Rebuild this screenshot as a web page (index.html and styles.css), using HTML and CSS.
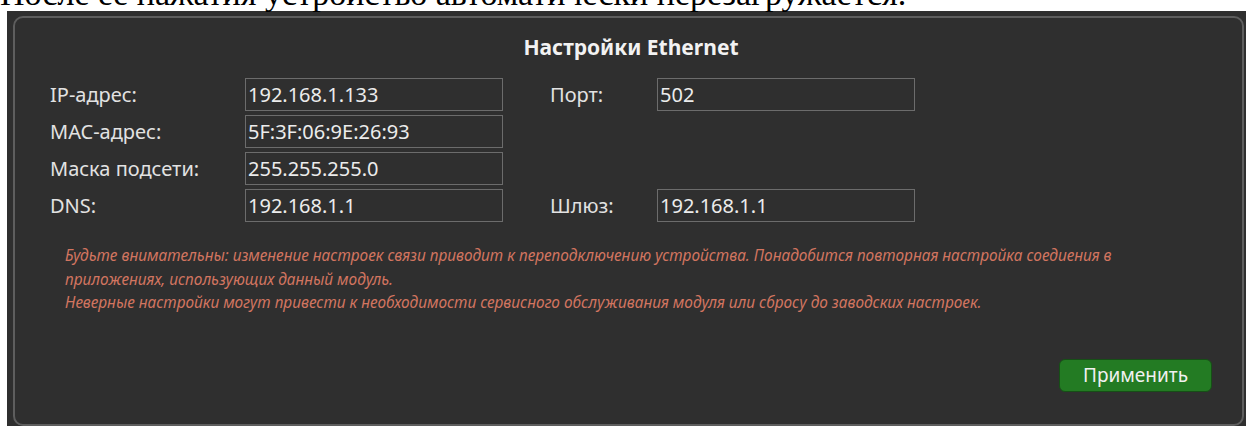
FILE: index.html
```html
<!DOCTYPE html>
<html lang="ru">
<head>
<meta charset="utf-8">
<title>Настройки Ethernet</title>
<link rel="stylesheet" href="styles.css">
</head>
<body>
<p class="note">После ее нажатия устройство автоматически перезагружается.</p>
<div class="frame">
  <form class="panel" onsubmit="return false">
    <h2 class="panel-title">Настройки Ethernet</h2>
    <div class="fields">
      <label class="field-label col-a" for="ip">IP-адрес:</label>
      <input class="field-input col-b" id="ip" type="text" value="192.168.1.133">
      <label class="field-label col-c" for="port">Порт:</label>
      <input class="field-input col-d" id="port" type="text" value="502">

      <label class="field-label col-a" for="mac">MAC-адрес:</label>
      <input class="field-input col-b" id="mac" type="text" value="5F:3F:06:9E:26:93">

      <label class="field-label col-a" for="mask">Маска подсети:</label>
      <input class="field-input col-b" id="mask" type="text" value="255.255.255.0">

      <label class="field-label col-a" for="dns">DNS:</label>
      <input class="field-input col-b" id="dns" type="text" value="192.168.1.1">
      <label class="field-label col-c" for="gw">Шлюз:</label>
      <input class="field-input col-d" id="gw" type="text" value="192.168.1.1">
    </div>
    <p class="warning">Будьте внимательны: изменение настроек связи приводит к переподключению устройства. Понадобится повторная настройка соедиения в приложениях, использующих данный модуль.<br>Неверные настройки могут привести к необходимости сервисного обслуживания модуля или сбросу до заводских настроек.</p>
    <div class="actions">
      <button class="apply" type="submit">Применить</button>
    </div>
  </form>
</div>
</body>
</html>
```

FILE: styles.css
```css
html, body {
  margin: 0;
  padding: 0;
  background: #ffffff;
  overflow: hidden;
}

.note {
  margin: -23px 0 0 0;
  font-family: "Liberation Serif", "Times New Roman", serif;
  font-size: 34px;
  line-height: 34px;
  color: #000000;
  white-space: nowrap;
}

.frame {
  margin-left: 7px;
  padding: 5px 2px 2px 6px;
  background: #2f2f2f;
}

.panel {
  border: 2px solid #5e5e5e;
  border-radius: 10px;
  padding: 15px 30px 32px 35px;
  background: #2f2f2f;
  font-family: "Noto Sans", "Open Sans", sans-serif;
  color: #e4e4e4;
}

.panel-title {
  margin: 0 0 17px 0;
  text-align: center;
  font-size: 21px;
  font-weight: 700;
  line-height: 28px;
  color: #f2f2f2;
}

.fields {
  display: grid;
  grid-template-columns: 195px 258px 154px 258px;
  grid-auto-rows: 33px;
  row-gap: 4px;
  align-items: center;
}

.col-a { grid-column: 1; }
.col-b { grid-column: 2; }
.col-c { grid-column: 3; padding-left: 47px; }
.col-d { grid-column: 4; }

.field-label {
  font-size: 20px;
  line-height: 27px;
  color: #e2e2e2;
}

.field-input {
  box-sizing: border-box;
  height: 33px;
  width: 258px;
  margin: 0;
  padding: 0 2px;
  border: 1px solid #6c6c6c;
  background: transparent;
  font-family: "Noto Sans", "Open Sans", sans-serif;
  font-size: 20px;
  color: #ececec;
  outline: none;
}

.warning {
  margin: 22px 0 0 15px;
  font-size: 15.4px;
  font-style: italic;
  line-height: 23.5px;
  color: #d27560;
}

.actions {
  display: flex;
  justify-content: flex-end;
  margin-top: 44px;
}

.apply {
  box-sizing: border-box;
  width: 153px;
  height: 33px;
  border: 1px solid #164f16;
  border-radius: 6px;
  background: #237b23;
  color: #f1f1f1;
  font-family: "Noto Sans", "Open Sans", sans-serif;
  font-size: 19px;
  cursor: pointer;
}
```
